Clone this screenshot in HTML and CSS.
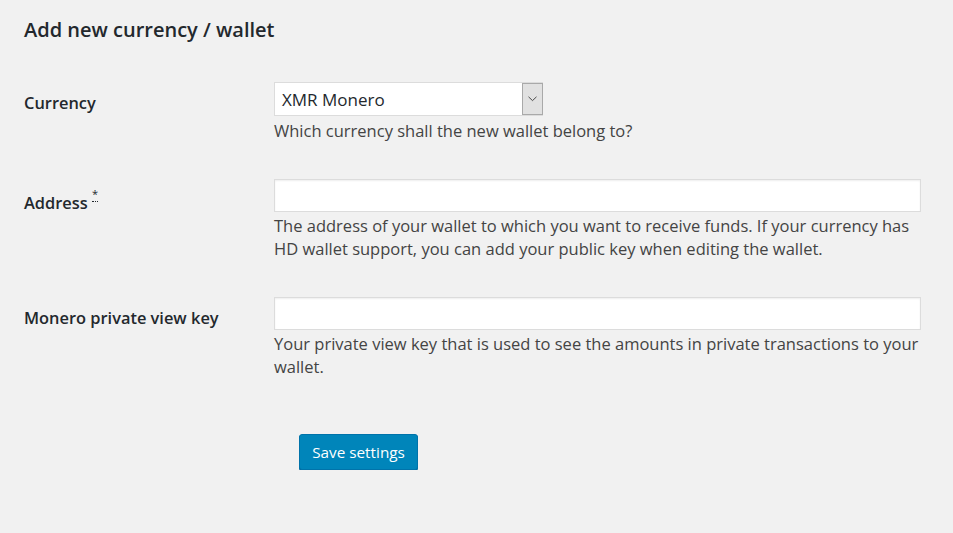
FILE: index.html
```html
<!DOCTYPE html>
<html lang="en">
<head>
<meta charset="utf-8">
<title>Add new currency / wallet</title>
<link rel="stylesheet" href="styles.css">
</head>
<body>
<div class="wrap">
  <h1 class="title">Add new currency / wallet</h1>
  <form class="form">
    <div class="row">
      <div class="label">Currency</div>
      <div class="field">
        <div class="select">
          <span class="select-value">XMR Monero</span>
          <span class="select-arrow">
            <svg width="9" height="6" viewBox="0 0 9 6"><polyline points="0.5,0.8 4.5,4.6 8.5,0.8" fill="none" stroke="#4a4a4a" stroke-width="1"/></svg>
          </span>
        </div>
        <p class="desc desc-select">Which currency shall the new wallet belong to?</p>
      </div>
    </div>
    <div class="row">
      <div class="label label-req">Address <sup class="req"><abbr title="required">*</abbr></sup></div>
      <div class="field">
        <input class="text-input" type="text">
        <p class="desc">The address of your wallet to which you want to receive funds. If your currency has HD wallet support, you can add your public key when editing the wallet.</p>
      </div>
    </div>
    <div class="row">
      <div class="label">Monero private view key</div>
      <div class="field">
        <input class="text-input" type="text">
        <p class="desc">Your private view key that is used to see the amounts in private transactions to your wallet.</p>
      </div>
    </div>
    <div class="submit-row">
      <div></div>
      <div class="field">
        <button type="button" class="button-primary">Save settings</button>
      </div>
    </div>
  </form>
</div>
</body>
</html>
```
FILE: styles.css
```css
html, body {
  margin: 0;
  padding: 0;
  background: #f1f1f1;
}
body {
  font-family: "Open Sans", "Noto Sans", sans-serif;
  color: #23282d;
}
.wrap {
  padding: 17px 32px 0 24px;
}
.title {
  margin: 0;
  font-size: 20px;
  line-height: 26px;
  font-weight: 600;
  color: #23282d;
}
.form {
  margin-top: 39px;
}
.row {
  display: grid;
  grid-template-columns: 250px 1fr;
  margin-bottom: 37px;
}
.label {
  padding-top: 10px;
  font-size: 16.4px;
  line-height: 22px;
  font-weight: 600;
  color: #23282d;
}
.label-req {
  padding-top: 12.5px;
}
.req {
  font-size: 11px;
  line-height: 0;
  vertical-align: 11px;
  font-weight: 400;
}
.req abbr {
  text-decoration: none;
  border-bottom: 1px dotted #23282d;
  cursor: help;
}
.field {
  min-width: 0;
}
.select {
  position: relative;
  box-sizing: border-box;
  width: 269px;
  height: 34px;
  background: #fff;
  border: 1px solid #dcdcdc;
  display: flex;
  align-items: center;
  padding-left: 7px;
  font-size: 17px;
  color: #23282d;
}
.select-value {
  line-height: 22px;
  padding-top: 1px;
}
.select-arrow {
  position: absolute;
  top: 0;
  right: -1px;
  bottom: 0;
  width: 19px;
  border: 1px solid #a9a9a9;
  background: #e1e1e1;
  display: flex;
  align-items: center;
  justify-content: center;
}
.text-input {
  display: block;
  box-sizing: border-box;
  width: 100%;
  height: 33px;
  margin: 0;
  padding: 3px 8px;
  border: 1px solid #dcdcdc;
  background: #fff;
  box-shadow: inset 0 1px 2px rgba(0, 0, 0, 0.07);
  font-family: inherit;
  font-size: 16.5px;
  outline: none;
}
.desc {
  margin: 2px 0 0;
  font-size: 16.5px;
  line-height: 23px;
  color: #444;
}
.desc-select {
  margin-top: 3px;
}
.submit-row {
  display: grid;
  grid-template-columns: 250px 1fr;
  margin-top: 56px;
}
.submit-row .field {
  padding-left: 25px;
}
.button-primary {
  box-sizing: border-box;
  height: 36px;
  width: 119px;
  padding: 0 10px 1px;
  border: 1px solid #0073aa;
  border-radius: 3px;
  background: #0085ba;
  box-shadow: 0 1px 0 #006799;
  color: #fff;
  font-family: inherit;
  font-size: 15.3px;
  line-height: 22px;
  cursor: pointer;
}
```
